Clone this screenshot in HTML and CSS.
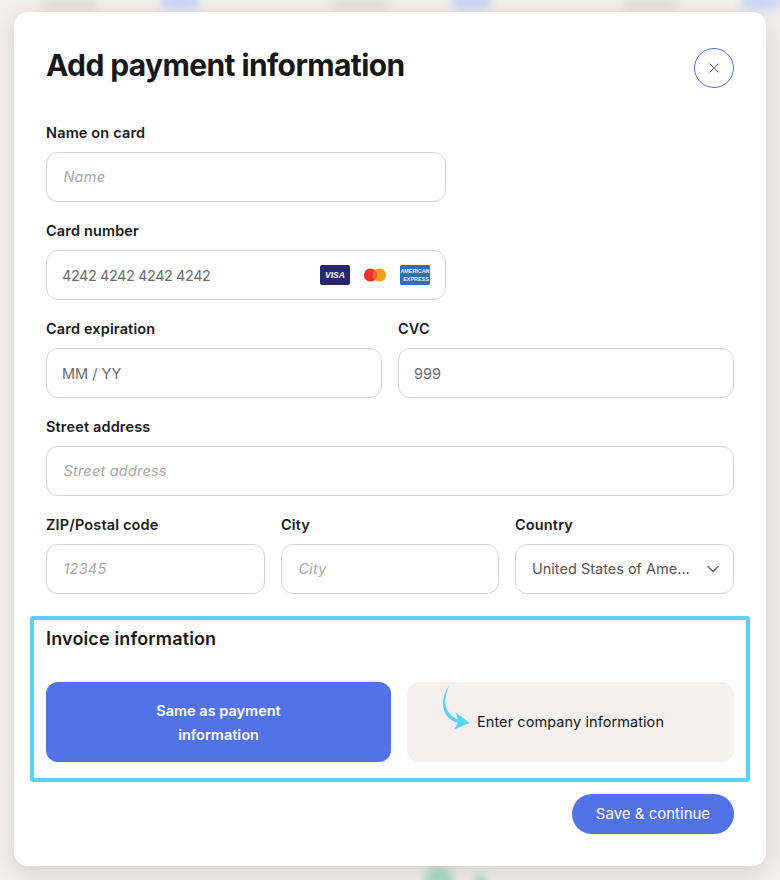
FILE: index.html
```html
<!DOCTYPE html>
<html lang="en">
<head>
<meta charset="utf-8">
<title>Add payment information</title>
<link rel="stylesheet" href="styles.css">
</head>
<body>
<div class="backdrop" aria-hidden="true">
  <span class="blob blue b1"></span><span class="blob blue b2"></span><span class="blob blue b3"></span>
  <span class="blob grey g1"></span><span class="blob grey g2"></span><span class="blob grey g3"></span>
  <span class="blob green n1"></span><span class="blob green n2"></span>
</div>
<main class="modal">
  <header class="head">
    <h1 class="title">Add payment information</h1>
    <button class="close" type="button" aria-label="Close">
      <svg width="12" height="12" viewBox="0 0 12 12"><path d="M1.5 1.5l9 9M10.5 1.5l-9 9" fill="none" stroke="#5272e8" stroke-width="1"/></svg>
    </button>
  </header>
  <div class="row half-left">
    <label class="field"><span class="label">Name on card</span><input class="input name" placeholder="Name"></label>
  </div>
  <div class="row half-left">
    <label class="field"><span class="label">Card number</span>
      <span class="input-wrap">
        <input class="input plain number" placeholder="4242 4242 4242 4242">
        <span class="cards">
          <svg width="30" height="20" viewBox="0 0 30 20"><rect width="30" height="20" rx="2" fill="#26276f"/><text x="15" y="13.2" text-anchor="middle" class="visa">VISA</text></svg>
          <svg width="30" height="20" viewBox="0 0 30 20"><circle cx="10.500" cy="10" r="6.600" fill="#eb2f2c"/><circle cx="19.500" cy="10" r="6.600" fill="#f79e1b"/><path d="M15 5.100a6.600 6.600 0 0 1 0 9.800a6.600 6.600 0 0 1 0-9.800z" fill="#f26122"/></svg>
          <svg width="30" height="20" viewBox="0 0 30 20"><rect width="30" height="20" rx="1.5" fill="#2b70b8"/><text x="15" y="8.400" text-anchor="middle" class="amex">AMERICAN</text><text x="16" y="15.600" text-anchor="middle" class="amex">EXPRESS</text></svg>
        </span>
      </span>
    </label>
  </div>
  <div class="row two">
    <label class="field"><span class="label">Card expiration</span><input class="input plain" placeholder="MM / YY"></label>
    <label class="field"><span class="label">CVC</span><input class="input plain" placeholder="999"></label>
  </div>
  <div class="row">
    <label class="field"><span class="label">Street address</span><input class="input name" placeholder="Street address"></label>
  </div>
  <div class="row three">
    <label class="field"><span class="label">ZIP/Postal code</span><input class="input name" placeholder="12345"></label>
    <label class="field"><span class="label">City</span><input class="input name" placeholder="City"></label>
    <div class="field"><span class="label">Country</span>
      <div class="select"><span class="select-text">United States of Ame...</span>
        <svg width="14" height="8" viewBox="0 0 14 8"><path d="M1.5 1.2L7 6.500l5.500-5.300" fill="none" stroke="#666" stroke-width="1.400"/></svg>
      </div>
    </div>
  </div>
  <section class="invoice">
    <h2 class="subtitle">Invoice information</h2>
    <div class="choices">
      <button class="choice active" type="button">Same as payment<br>information</button>
      <button class="choice other" type="button">Enter company information</button>
    </div>
    <span class="highlight" aria-hidden="true"></span>
    <svg class="arrow" width="30" height="50" viewBox="0 0 30 50" aria-hidden="true">
      <path d="M8 2C3.500 12 3 20 6.500 26.500C9.500 31.500 13.500 34.500 19 36.500L19 39.500C12.500 38 7 34.500 4 28.500C0.500 20.500 2 10 8 2z" fill="#56d3f7"/>
      <path d="M15 28.500L28.500 39 13 45.500 17.500 38z" fill="#56d3f7"/>
    </svg>
  </section>
  <footer class="foot"><button class="save" type="button">Save &amp; continue</button></footer>
</main>
</body>
</html>
```
FILE: styles.css
```css
* { box-sizing: border-box; }
html, body { margin: 0; height: 880px; overflow: hidden; }
body {
  background: #f3f0ee;
  font-family: "Inter", "Liberation Sans", sans-serif;
  color: #17171a;
  padding: 12px 14px 14px;
  position: relative;
}
.backdrop { position: absolute; inset: 0; overflow: hidden; }
.blob { position: absolute; filter: blur(4px); border-radius: 12px; }
.blue { background: #ccd6f5; width: 40px; height: 18px; top: -8px; }
.grey { background: #e3dfdc; width: 56px; height: 14px; top: -4px; }
.green { background: #a5dcc2; border-radius: 50%; }
.b1 { left: 160px; } .b2 { left: 451px; } .b3 { left: 742px; }
.g1 { left: 42px; } .g2 { left: 332px; } .g3 { left: 622px; }
.n1 { left: 424px; top: 866px; width: 30px; height: 40px; }
.n2 { left: 472px; top: 876px; width: 16px; height: 16px; }
.modal {
  position: relative;
  height: 854px;
  background: #fff;
  border-radius: 14px;
  padding: 32px;
  box-shadow: 0 6px 24px rgba(90, 80, 75, 0.2);
}
.head { display: flex; justify-content: space-between; height: 80px; align-items: flex-start; }
.title { margin: 0; font-size: 30px; line-height: 42px; font-weight: 700; letter-spacing: -0.62px; }
.close {
  width: 40px; height: 40px; margin-top: 4px; padding: 0;
  border: 1px solid #5272e8; border-radius: 50%; background: #fff;
  display: flex; align-items: center; justify-content: center;
}
.row { display: grid; grid-template-columns: 1fr; gap: 16px; margin-bottom: 20px; }
.half-left { width: 400px; }
.two { grid-template-columns: 336px 336px; }
.three { grid-template-columns: 219px 218px 219px; margin-bottom: 0; }
.field { display: block; min-width: 0; }
.label { display: block; height: 20px; margin-bottom: 8px; font-size: 14.500px; line-height: 18px; font-weight: 600; letter-spacing: 0.15px; color: #1a1a1e; }
.input {
  display: block; width: 100%; height: 50px; padding: 0 15px;
  border: 1px solid #d6d4d2; border-radius: 12px; background: #fff;
  font: 400 14.500px "Inter", "Liberation Sans", sans-serif; outline: none;
}
.input::placeholder { opacity: 1; }
.name { padding: 0 16.500px 2px; letter-spacing: 0.2px; }
.name::placeholder { color: #a9a9a9; font-style: italic; }
.plain::placeholder { color: #6d6d6d; }
.number { letter-spacing: -0.45px; }
.input-wrap { display: block; position: relative; }
.cards { position: absolute; top: 15px; right: 16px; display: flex; gap: 10px; }
.visa { font: italic 800 8.500px "Liberation Sans", sans-serif; fill: #fff; }
.amex { font: 700 5.400px "Liberation Sans", sans-serif; fill: #e8f1fa; }
.select {
  display: flex; align-items: center; justify-content: space-between; gap: 12px;
  height: 50px; padding: 0 13px 2px 16px;
  border: 1px solid #d6d4d2; border-radius: 12px; background: #fff;
  font-size: 14.500px; color: #555;
}
.select-text { min-width: 0; white-space: nowrap; }
.select svg { flex: none; margin-top: 2px; }
.invoice { position: relative; margin-top: 32px; }
.subtitle { margin: 0 0 32px; padding-top: 1px; height: 24px; font-size: 18px; line-height: 24px; font-weight: 600; letter-spacing: 0.15px; color: #17171a; }
.choices { display: grid; grid-template-columns: 345px 327px; gap: 16px; }
.choice {
  height: 80px; border: 0; border-radius: 12px; padding: 0 40px;
  font-family: "Inter", "Liberation Sans", sans-serif; font-size: 14.500px; line-height: 24px;
}
.active { background: #5272e8; color: #fff; font-weight: 600; padding-top: 2px; }
.other { background: #f3f0ef; color: #17171a; letter-spacing: 0.08px; }
.highlight {
  position: absolute; left: -16px; right: -16px; top: -10px; bottom: -20px;
  border: 4px solid #56d3f7; border-radius: 3px; pointer-events: none;
}
.arrow { position: absolute; left: 395px; top: 58px; }
.foot { display: flex; justify-content: flex-end; margin-top: 32px; }
.save {
  width: 162px; height: 40px; border: 0; border-radius: 20px; padding: 0 0 1px;
  background: #5272e8; color: #fff;
  font: 400 15px "Inter", "Liberation Sans", sans-serif;
}
```
